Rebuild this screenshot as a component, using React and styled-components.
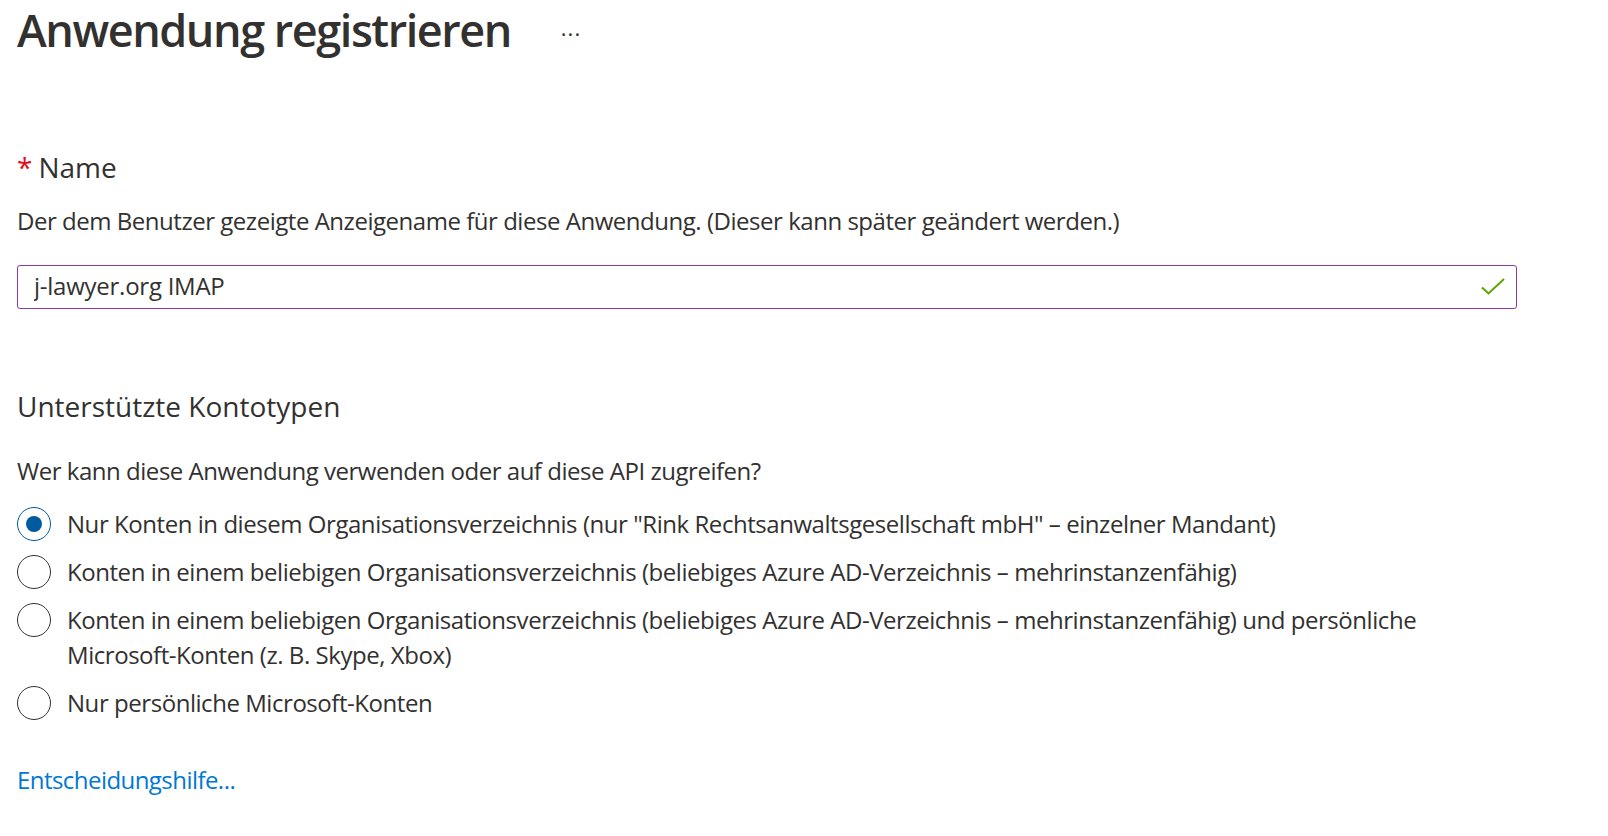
import React from "react";
import styled, { createGlobalStyle } from "styled-components";

const $text = "#323130";
const $font = `"Open Sans", "Noto Sans", sans-serif`;

const GlobalStyle = createGlobalStyle`
  body {
    margin: 0;
    background: #ffffff;
    font-family: ${$font};
    color: ${$text};
  }
`;

const StyledPage = styled.div`
  padding-left: 17px;
  width: 1500px;
`;
const StyledHeader = styled.div`
  display: flex;
  align-items: center;
  gap: 50px;
  height: 60px;
`;
const StyledTitle = styled.h1`
  margin: 0;
  font-size: 45px;
  line-height: 60px;
  font-weight: 600;
  letter-spacing: -1.45px;
`;
const StyledMore = styled.span`
  font-size: 22px;
  line-height: 22px;
  letter-spacing: 1px;
  margin-top: 6px;
`;
const StyledLabel = styled.div`
  margin-top: 89px;
  font-size: 28px;
  line-height: 36px;
`;
const StyledRequired = styled.span`
  color: #e00b1c;
  margin-right: 6px;
`;
const StyledText = styled.p`
  margin: ${(p) => p.$top || 0}px 0 0;
  font-size: 24px;
  line-height: 32px;
  letter-spacing: -0.47px;
`;
const StyledInputBox = styled.div`
  margin-top: 28px;
  height: 44px;
  box-sizing: border-box;
  border: 1px solid #8a3aa8;
  border-radius: 3px;
  display: flex;
  align-items: center;
  padding: 0 11px 2px 16px;
`;
const StyledInput = styled.input`
  flex: 1;
  border: none;
  outline: none;
  padding: 0;
  font-family: ${$font};
  font-size: 24px;
  line-height: 40px;
  height: 40px;
  letter-spacing: -0.25px;
  color: ${$text};
  background: transparent;
`;
const StyledSectionTitle = styled.h2`
  margin: 79px 0 0;
  font-size: 28px;
  line-height: 36px;
  font-weight: 400;
`;
const StyledRadioList = styled.div`
  margin-top: 19px;
  display: flex;
  flex-direction: column;
  gap: 13px;
`;
const StyledRadioRow = styled.label`
  display: flex;
  align-items: flex-start;
  gap: 16px;
  cursor: pointer;
`;
const StyledCircle = styled.span`
  flex: none;
  width: 34px;
  height: 34px;
  margin-top: 1px;
  box-sizing: border-box;
  border-radius: 50%;
  border: 1px solid ${(p) => (p.$checked ? "#005a9e" : $text)};
  display: flex;
  align-items: center;
  justify-content: center;
  &::after {
    content: "";
    width: 16px;
    height: 16px;
    border-radius: 50%;
    background: #005a9e;
    display: ${(p) => (p.$checked ? "block" : "none")};
  }
`;
const StyledRadioText = styled.span`
  font-size: 24px;
  line-height: 35px;
  letter-spacing: -0.45px;
`;
const StyledLink = styled.a`
  display: block;
  margin-top: 44px;
  font-size: 24px;
  line-height: 32px;
  letter-spacing: -0.55px;
  color: #0078d4;
  text-decoration: none;
`;

const OPTIONS = [
  {
    id: 1,
    checked: true,
    title:
      'Nur Konten in diesem Organisationsverzeichnis (nur "Rink Rechtsanwaltsgesellschaft mbH" – einzelner Mandant)',
  },
  {
    id: 2,
    title:
      "Konten in einem beliebigen Organisationsverzeichnis (beliebiges Azure AD-Verzeichnis – mehrinstanzenfähig)",
  },
  {
    id: 3,
    title:
      "Konten in einem beliebigen Organisationsverzeichnis (beliebiges Azure AD-Verzeichnis – mehrinstanzenfähig) und persönliche Microsoft-Konten (z. B. Skype, Xbox)",
  },
  { id: 4, title: "Nur persönliche Microsoft-Konten" },
];

const CheckIcon = () => (
  <svg width="24" height="17" viewBox="0 0 24 17" fill="none">
    <path d="M1 9.5 L7.5 15.5 L23 1" stroke="#5aa500" strokeWidth="2" />
  </svg>
);

const App = () => {
  return (
    <StyledPage>
      <GlobalStyle />
      <StyledHeader>
        <StyledTitle>Anwendung registrieren</StyledTitle>
        <StyledMore>···</StyledMore>
      </StyledHeader>
      <StyledLabel>
        <StyledRequired>*</StyledRequired>Name
      </StyledLabel>
      <StyledText $top={20}>
        Der dem Benutzer gezeigte Anzeigename für diese Anwendung. (Dieser kann
        später geändert werden.)
      </StyledText>
      <StyledInputBox>
        <StyledInput defaultValue="j-lawyer.org IMAP" />
        <CheckIcon />
      </StyledInputBox>
      <StyledSectionTitle>Unterstützte Kontotypen</StyledSectionTitle>
      <StyledText $top={31}>
        Wer kann diese Anwendung verwenden oder auf diese API zugreifen?
      </StyledText>
      <StyledRadioList>
        {OPTIONS.map((item) => (
          <StyledRadioRow key={item.id}>
            <StyledCircle $checked={item.checked} />
            <StyledRadioText>{item.title}</StyledRadioText>
          </StyledRadioRow>
        ))}
      </StyledRadioList>
      <StyledLink href="#">Entscheidungshilfe...</StyledLink>
    </StyledPage>
  );
};
export default App;
